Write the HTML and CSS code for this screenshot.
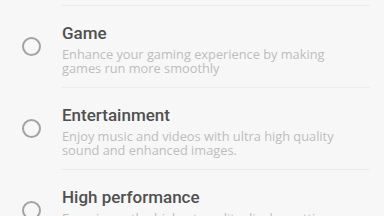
FILE: index.html
```html
<!DOCTYPE html>
<html lang="en">
<head>
  <meta charset="UTF-8">
  <meta name="viewport" content="width=device-width, initial-scale=1.0">
  <title>Screen mode</title>
  <link rel="stylesheet" href="styles.css">
</head>
<body>
  <div class="mode-list">
    <label class="mode">
      <span class="radio"></span>
      <div class="mode-text">
        <div class="mode-title">Game</div>
        <div class="mode-desc">Enhance your gaming experience by making games run more smoothly</div>
      </div>
    </label>
    <label class="mode">
      <span class="radio"></span>
      <div class="mode-text">
        <div class="mode-title">Entertainment</div>
        <div class="mode-desc">Enjoy music and videos with ultra high quality sound and enhanced images.</div>
      </div>
    </label>
    <label class="mode">
      <span class="radio"></span>
      <div class="mode-text">
        <div class="mode-title">High performance</div>
        <div class="mode-desc">Experience the highest quality display settings and maximum performance.</div>
      </div>
    </label>
  </div>
</body>
</html>
```

FILE: styles.css
```css
body {
  margin: 0;
  background: #f7f7f7;
  font-family: Roboto, "Noto Sans", sans-serif;
  overflow: hidden;
}
.mode-list {
  padding-top: 5px;
}
.mode {
  display: flex;
  align-items: center;
}
.radio {
  flex: 0 0 auto;
  width: 15px;
  height: 15px;
  margin: 0 20px 0 22px;
  border: 2px solid #a3a3a3;
  border-radius: 50%;
}
.mode-text {
  flex: 1;
  margin-right: 14px;
  border-top: 1px solid #ececec;
  padding: 16px 0 12px 1px;
}
.mode-title {
  font-size: 17px;
  line-height: 22px;
  font-weight: 500;
  color: #505050;
}
.mode-desc {
  margin-top: 4px;
  font-family: "Open Sans", Roboto, sans-serif;
  font-size: 12.8px;
  line-height: 13.5px;
  color: #bdbdbd;
  padding-right: 16px;
}
```
